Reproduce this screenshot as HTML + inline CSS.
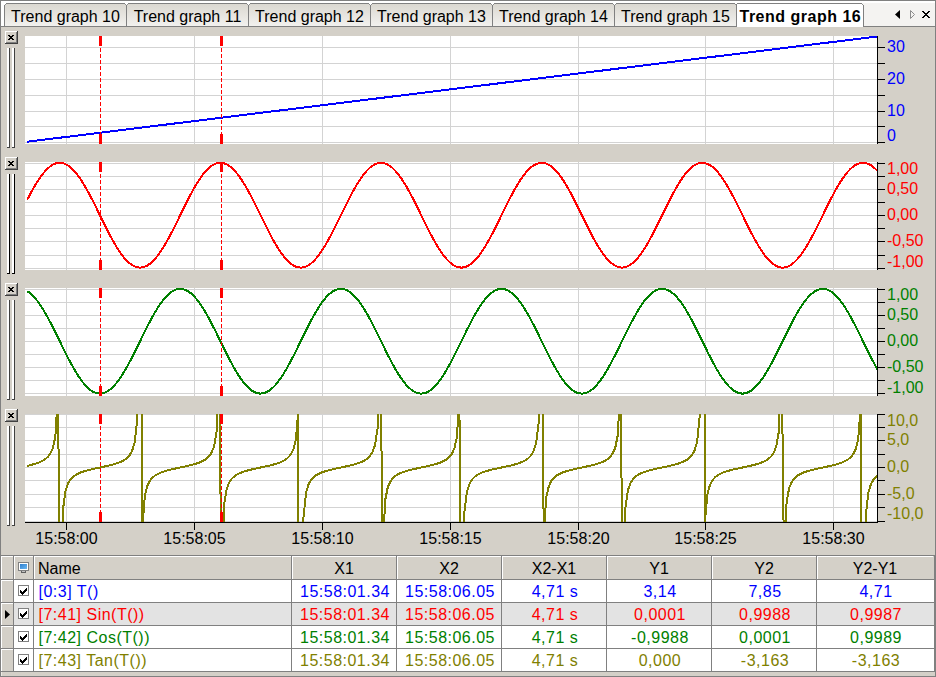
<!DOCTYPE html>
<html><head><meta charset="utf-8"><title>Trend graph</title>
<style>html,body{margin:0;padding:0;width:936px;height:677px;overflow:hidden;background:#d4d0c8;}
svg text{font-family:"Liberation Sans",sans-serif;}</style></head>
<body><svg width="936" height="677" viewBox="0 0 936 677" style="position:absolute;left:0;top:0;display:block" font-family="Liberation Sans, sans-serif"><rect x="0" y="0" width="936" height="677" fill="#d4d0c8"/>
<rect x="1" y="1" width="934" height="25" fill="#f4f3f1"/>
<rect x="1" y="1" width="3" height="25" fill="#ffffff"/>
<rect x="1" y="1" width="934" height="2" fill="#ffffff"/>
<rect x="0" y="0" width="936" height="1" fill="#808080"/>
<rect x="0" y="0" width="1" height="677" fill="#808080"/>
<rect x="935" y="0" width="1" height="677" fill="#808080"/>
<defs><linearGradient id="tg" x1="0" y1="0" x2="0" y2="1"><stop offset="0" stop-color="#dbd8d1"/><stop offset="1" stop-color="#f2f1ee"/></linearGradient></defs>
<rect x="5" y="4" width="121" height="22" fill="url(#tg)"/>
<rect x="4" y="4" width="1" height="22" fill="#808080"/>
<rect x="5" y="3" width="121" height="1" fill="#808080"/>
<text x="65.5" y="22" fill="#000" font-size="16" text-anchor="middle">Trend graph 10</text>
<rect x="127" y="4" width="121" height="22" fill="url(#tg)"/>
<rect x="126" y="4" width="1" height="22" fill="#808080"/>
<rect x="127" y="3" width="121" height="1" fill="#808080"/>
<text x="187.5" y="22" fill="#000" font-size="16" text-anchor="middle">Trend graph 11</text>
<rect x="249" y="4" width="121" height="22" fill="url(#tg)"/>
<rect x="248" y="4" width="1" height="22" fill="#808080"/>
<rect x="249" y="3" width="121" height="1" fill="#808080"/>
<text x="309.5" y="22" fill="#000" font-size="16" text-anchor="middle">Trend graph 12</text>
<rect x="371" y="4" width="121" height="22" fill="url(#tg)"/>
<rect x="370" y="4" width="1" height="22" fill="#808080"/>
<rect x="371" y="3" width="121" height="1" fill="#808080"/>
<text x="431.5" y="22" fill="#000" font-size="16" text-anchor="middle">Trend graph 13</text>
<rect x="493" y="4" width="121" height="22" fill="url(#tg)"/>
<rect x="492" y="4" width="1" height="22" fill="#808080"/>
<rect x="493" y="3" width="121" height="1" fill="#808080"/>
<text x="553.5" y="22" fill="#000" font-size="16" text-anchor="middle">Trend graph 14</text>
<rect x="615" y="4" width="121" height="22" fill="url(#tg)"/>
<rect x="614" y="4" width="1" height="22" fill="#808080"/>
<rect x="615" y="3" width="121" height="1" fill="#808080"/>
<text x="675.5" y="22" fill="#000" font-size="16" text-anchor="middle">Trend graph 15</text>
<rect x="736" y="4" width="1" height="22" fill="#808080"/>
<rect x="125" y="3" width="3" height="1" fill="#ffffff"/>
<rect x="126" y="4" width="1" height="1" fill="#ffffff"/>
<rect x="125" y="4" width="1" height="1" fill="#909090"/>
<rect x="127" y="4" width="1" height="1" fill="#909090"/>
<rect x="247" y="3" width="3" height="1" fill="#ffffff"/>
<rect x="248" y="4" width="1" height="1" fill="#ffffff"/>
<rect x="247" y="4" width="1" height="1" fill="#909090"/>
<rect x="249" y="4" width="1" height="1" fill="#909090"/>
<rect x="369" y="3" width="3" height="1" fill="#ffffff"/>
<rect x="370" y="4" width="1" height="1" fill="#ffffff"/>
<rect x="369" y="4" width="1" height="1" fill="#909090"/>
<rect x="371" y="4" width="1" height="1" fill="#909090"/>
<rect x="491" y="3" width="3" height="1" fill="#ffffff"/>
<rect x="492" y="4" width="1" height="1" fill="#ffffff"/>
<rect x="491" y="4" width="1" height="1" fill="#909090"/>
<rect x="493" y="4" width="1" height="1" fill="#909090"/>
<rect x="613" y="3" width="3" height="1" fill="#ffffff"/>
<rect x="614" y="4" width="1" height="1" fill="#ffffff"/>
<rect x="613" y="4" width="1" height="1" fill="#909090"/>
<rect x="615" y="4" width="1" height="1" fill="#909090"/>
<rect x="735" y="3" width="3" height="1" fill="#ffffff"/>
<rect x="736" y="4" width="1" height="1" fill="#ffffff"/>
<rect x="735" y="4" width="1" height="1" fill="#909090"/>
<rect x="737" y="4" width="1" height="1" fill="#909090"/>
<rect x="4" y="3" width="2" height="1" fill="#ffffff"/>
<rect x="4" y="4" width="1" height="1" fill="#ffffff"/>
<rect x="5" y="4" width="1" height="1" fill="#909090"/>
<rect x="1" y="26" width="735" height="1" fill="#808080"/>
<rect x="864" y="26" width="71" height="1" fill="#808080"/>
<rect x="737" y="4" width="126" height="23" fill="#ffffff"/>
<rect x="737" y="3" width="126" height="1" fill="#808080"/>
<rect x="736" y="4" width="1" height="23" fill="#808080"/>
<rect x="863" y="4" width="1" height="23" fill="#808080"/>
<text x="739.5" y="22" fill="#000" font-size="16" font-weight="bold" letter-spacing="0.5">Trend graph 16</text>
<rect x="862" y="3" width="2" height="1" fill="#f4f3f1"/>
<rect x="863" y="4" width="1" height="1" fill="#f4f3f1"/>
<rect x="862" y="4" width="1" height="1" fill="#909090"/>
<path d="M900 10 L900 19 L895 14.5 Z" fill="#000"/>
<path d="M910.5 10.5 L910.5 18.5 L914.5 14.5 Z" fill="none" stroke="#8c8c8c" stroke-width="1"/>
<rect x="922" y="11" width="2" height="1" fill="#000"/>
<rect x="928" y="11" width="2" height="1" fill="#000"/>
<rect x="923" y="12" width="2" height="1" fill="#000"/>
<rect x="927" y="12" width="2" height="1" fill="#000"/>
<rect x="924" y="13" width="4" height="1" fill="#000"/>
<rect x="925" y="14" width="2" height="1" fill="#000"/>
<rect x="924" y="15" width="4" height="1" fill="#000"/>
<rect x="923" y="16" width="2" height="1" fill="#000"/>
<rect x="927" y="16" width="2" height="1" fill="#000"/>
<rect x="922" y="17" width="2" height="1" fill="#000"/>
<rect x="928" y="17" width="2" height="1" fill="#000"/>
<rect x="5" y="31" width="13" height="13" fill="#404040"/>
<rect x="5" y="31" width="12" height="12" fill="#ffffff"/>
<rect x="6" y="32" width="11" height="11" fill="#808080"/>
<rect x="6" y="32" width="10" height="10" fill="#d4d0c8"/>
<rect x="8" y="35" width="2" height="1" fill="#000"/>
<rect x="12" y="35" width="2" height="1" fill="#000"/>
<rect x="9" y="36" width="4" height="1" fill="#000"/>
<rect x="10" y="37" width="2" height="1" fill="#000"/>
<rect x="9" y="38" width="4" height="1" fill="#000"/>
<rect x="8" y="39" width="2" height="1" fill="#000"/>
<rect x="12" y="39" width="2" height="1" fill="#000"/>
<rect x="7" y="48" width="3" height="100" fill="#404040"/>
<rect x="7" y="48" width="2" height="99" fill="#ffffff"/>
<rect x="12" y="48" width="3" height="100" fill="#404040"/>
<rect x="12" y="48" width="2" height="99" fill="#ffffff"/>
<rect x="25" y="36" width="852" height="108" fill="#ffffff"/>
<rect x="66" y="36" width="1" height="108" fill="#d3d3d3"/>
<rect x="194" y="36" width="1" height="108" fill="#d3d3d3"/>
<rect x="322" y="36" width="1" height="108" fill="#d3d3d3"/>
<rect x="450" y="36" width="1" height="108" fill="#d3d3d3"/>
<rect x="578" y="36" width="1" height="108" fill="#d3d3d3"/>
<rect x="705" y="36" width="1" height="108" fill="#d3d3d3"/>
<rect x="833" y="36" width="1" height="108" fill="#d3d3d3"/>
<rect x="25" y="47" width="852" height="1" fill="#d3d3d3"/>
<rect x="25" y="63" width="852" height="1" fill="#d3d3d3"/>
<rect x="25" y="79" width="852" height="1" fill="#d3d3d3"/>
<rect x="25" y="95" width="852" height="1" fill="#d3d3d3"/>
<rect x="25" y="111" width="852" height="1" fill="#d3d3d3"/>
<rect x="25" y="126" width="852" height="1" fill="#d3d3d3"/>
<rect x="25" y="142" width="852" height="1" fill="#d3d3d3"/>
<rect x="877" y="36" width="1" height="108" fill="#000"/>
<rect x="878" y="47" width="7" height="1" fill="#000"/>
<rect x="878" y="63" width="7" height="1" fill="#000"/>
<rect x="878" y="79" width="7" height="1" fill="#000"/>
<rect x="878" y="95" width="7" height="1" fill="#000"/>
<rect x="878" y="111" width="7" height="1" fill="#000"/>
<rect x="878" y="126" width="7" height="1" fill="#000"/>
<rect x="878" y="142" width="7" height="1" fill="#000"/>
<text x="887" y="52" fill="#0000ff" font-size="16">30</text>
<text x="887" y="84" fill="#0000ff" font-size="16">20</text>
<text x="887" y="116" fill="#0000ff" font-size="16">10</text>
<text x="887" y="141" fill="#0000ff" font-size="16">0</text>
<clipPath id="cp0"><rect x="25" y="36" width="852" height="108"/></clipPath>
<polyline clip-path="url(#cp0)" points="27.27,141.75 29.83,141.43 32.38,141.12 34.94,140.80 37.50,140.48 40.05,140.17 42.61,139.85 45.17,139.53 47.72,139.22 50.28,138.90 52.84,138.58 55.39,138.27 57.95,137.95 60.51,137.63 63.06,137.32 65.62,137.00 68.18,136.68 70.73,136.37 73.29,136.05 75.85,135.73 78.40,135.42 80.96,135.10 83.52,134.78 86.07,134.47 88.63,134.15 91.19,133.83 93.74,133.52 96.30,133.20 98.86,132.88 101.41,132.57 103.97,132.25 106.53,131.93 109.08,131.62 111.64,131.30 114.20,130.98 116.75,130.67 119.31,130.35 121.87,130.03 124.42,129.72 126.98,129.40 129.54,129.08 132.09,128.77 134.65,128.45 137.21,128.13 139.76,127.82 142.32,127.50 144.88,127.18 147.43,126.87 149.99,126.55 152.55,126.23 155.11,125.92 157.66,125.60 160.22,125.28 162.78,124.97 165.33,124.65 167.89,124.33 170.45,124.02 173.00,123.70 175.56,123.38 178.12,123.07 180.67,122.75 183.23,122.43 185.79,122.12 188.34,121.80 190.90,121.48 193.46,121.17 196.01,120.85 198.57,120.53 201.13,120.22 203.68,119.90 206.24,119.58 208.80,119.27 211.35,118.95 213.91,118.63 216.47,118.32 219.02,118.00 221.58,117.68 224.14,117.37 226.69,117.05 229.25,116.73 231.81,116.42 234.36,116.10 236.92,115.78 239.48,115.47 242.03,115.15 244.59,114.83 247.15,114.52 249.70,114.20 252.26,113.88 254.82,113.57 257.37,113.25 259.93,112.93 262.49,112.62 265.04,112.30 267.60,111.98 270.16,111.67 272.71,111.35 275.27,111.03 277.83,110.72 280.38,110.40 282.94,110.08 285.50,109.77 288.05,109.45 290.61,109.13 293.17,108.82 295.72,108.50 298.28,108.18 300.84,107.87 303.39,107.55 305.95,107.23 308.51,106.92 311.06,106.60 313.62,106.28 316.18,105.97 318.73,105.65 321.29,105.33 323.85,105.02 326.40,104.70 328.96,104.38 331.52,104.07 334.07,103.75 336.63,103.43 339.19,103.12 341.74,102.80 344.30,102.48 346.86,102.17 349.41,101.85 351.97,101.53 354.53,101.22 357.08,100.90 359.64,100.58 362.20,100.27 364.75,99.95 367.31,99.63 369.87,99.32 372.42,99.00 374.98,98.68 377.54,98.37 380.09,98.05 382.65,97.73 385.21,97.42 387.76,97.10 390.32,96.78 392.88,96.47 395.43,96.15 397.99,95.83 400.55,95.52 403.10,95.20 405.66,94.88 408.22,94.57 410.78,94.25 413.33,93.93 415.89,93.62 418.45,93.30 421.00,92.98 423.56,92.67 426.12,92.35 428.67,92.03 431.23,91.72 433.79,91.40 436.34,91.08 438.90,90.77 441.46,90.45 444.01,90.13 446.57,89.82 449.13,89.50 451.68,89.18 454.24,88.87 456.80,88.55 459.35,88.23 461.91,87.92 464.47,87.60 467.02,87.28 469.58,86.97 472.14,86.65 474.69,86.33 477.25,86.02 479.81,85.70 482.36,85.38 484.92,85.07 487.48,84.75 490.03,84.43 492.59,84.12 495.15,83.80 497.70,83.48 500.26,83.17 502.82,82.85 505.37,82.53 507.93,82.22 510.49,81.90 513.04,81.58 515.60,81.27 518.16,80.95 520.71,80.63 523.27,80.32 525.83,80.00 528.38,79.68 530.94,79.37 533.50,79.05 536.05,78.73 538.61,78.42 541.17,78.10 543.72,77.78 546.28,77.47 548.84,77.15 551.39,76.83 553.95,76.52 556.51,76.20 559.06,75.88 561.62,75.57 564.18,75.25 566.73,74.93 569.29,74.62 571.85,74.30 574.40,73.98 576.96,73.67 579.52,73.35 582.07,73.03 584.63,72.72 587.19,72.40 589.74,72.08 592.30,71.77 594.86,71.45 597.41,71.13 599.97,70.82 602.53,70.50 605.08,70.18 607.64,69.87 610.20,69.55 612.75,69.23 615.31,68.92 617.87,68.60 620.42,68.28 622.98,67.97 625.54,67.65 628.09,67.33 630.65,67.02 633.21,66.70 635.76,66.38 638.32,66.07 640.88,65.75 643.43,65.43 645.99,65.12 648.55,64.80 651.10,64.48 653.66,64.17 656.22,63.85 658.78,63.53 661.33,63.22 663.89,62.90 666.45,62.58 669.00,62.27 671.56,61.95 674.12,61.63 676.67,61.32 679.23,61.00 681.79,60.68 684.34,60.37 686.90,60.05 689.46,59.73 692.01,59.42 694.57,59.10 697.13,58.78 699.68,58.47 702.24,58.15 704.80,57.83 707.35,57.52 709.91,57.20 712.47,56.88 715.02,56.57 717.58,56.25 720.14,55.93 722.69,55.62 725.25,55.30 727.81,54.98 730.36,54.67 732.92,54.35 735.48,54.03 738.03,53.72 740.59,53.40 743.15,53.08 745.70,52.77 748.26,52.45 750.82,52.13 753.37,51.82 755.93,51.50 758.49,51.18 761.04,50.87 763.60,50.55 766.16,50.23 768.71,49.92 771.27,49.60 773.83,49.28 776.38,48.97 778.94,48.65 781.50,48.33 784.05,48.02 786.61,47.70 789.17,47.38 791.72,47.07 794.28,46.75 796.84,46.43 799.39,46.12 801.95,45.80 804.51,45.48 807.06,45.17 809.62,44.85 812.18,44.53 814.73,44.22 817.29,43.90 819.85,43.58 822.40,43.27 824.96,42.95 827.52,42.63 830.07,42.32 832.63,42.00 835.19,41.68 837.74,41.37 840.30,41.05 842.86,40.73 845.41,40.42 847.97,40.10 850.53,39.78 853.08,39.47 855.64,39.15 858.20,38.83 860.75,38.52 863.31,38.20 865.87,37.88 868.42,37.57 870.98,37.25 873.54,36.93 876.09,36.62 878.65,36.30" fill="none" stroke="#0000ff" stroke-width="2" stroke-linejoin="round" shape-rendering="crispEdges"/>
<line x1="100.5" y1="36" x2="100.5" y2="144" stroke="#ff0000" stroke-width="1" stroke-dasharray="4,2"/>
<rect x="99" y="36" width="3" height="10" fill="#ff0000"/>
<rect x="99" y="134" width="3" height="10" fill="#ff0000"/>
<line x1="221.5" y1="36" x2="221.5" y2="144" stroke="#ff0000" stroke-width="1" stroke-dasharray="4,2"/>
<rect x="220" y="36" width="3" height="10" fill="#ff0000"/>
<rect x="220" y="134" width="3" height="10" fill="#ff0000"/>
<rect x="5" y="157" width="13" height="13" fill="#404040"/>
<rect x="5" y="157" width="12" height="12" fill="#ffffff"/>
<rect x="6" y="158" width="11" height="11" fill="#808080"/>
<rect x="6" y="158" width="10" height="10" fill="#d4d0c8"/>
<rect x="8" y="161" width="2" height="1" fill="#000"/>
<rect x="12" y="161" width="2" height="1" fill="#000"/>
<rect x="9" y="162" width="4" height="1" fill="#000"/>
<rect x="10" y="163" width="2" height="1" fill="#000"/>
<rect x="9" y="164" width="4" height="1" fill="#000"/>
<rect x="8" y="165" width="2" height="1" fill="#000"/>
<rect x="12" y="165" width="2" height="1" fill="#000"/>
<rect x="7" y="174" width="3" height="100" fill="#000000"/>
<rect x="7" y="174" width="2" height="99" fill="#ffffff"/>
<rect x="12" y="174" width="3" height="100" fill="#000000"/>
<rect x="12" y="174" width="2" height="99" fill="#ffffff"/>
<rect x="25" y="162" width="852" height="108" fill="#ffffff"/>
<rect x="66" y="162" width="1" height="108" fill="#d3d3d3"/>
<rect x="194" y="162" width="1" height="108" fill="#d3d3d3"/>
<rect x="322" y="162" width="1" height="108" fill="#d3d3d3"/>
<rect x="450" y="162" width="1" height="108" fill="#d3d3d3"/>
<rect x="578" y="162" width="1" height="108" fill="#d3d3d3"/>
<rect x="705" y="162" width="1" height="108" fill="#d3d3d3"/>
<rect x="833" y="162" width="1" height="108" fill="#d3d3d3"/>
<rect x="25" y="163" width="852" height="1" fill="#d3d3d3"/>
<rect x="25" y="176" width="852" height="1" fill="#d3d3d3"/>
<rect x="25" y="189" width="852" height="1" fill="#d3d3d3"/>
<rect x="25" y="202" width="852" height="1" fill="#d3d3d3"/>
<rect x="25" y="215" width="852" height="1" fill="#d3d3d3"/>
<rect x="25" y="228" width="852" height="1" fill="#d3d3d3"/>
<rect x="25" y="241" width="852" height="1" fill="#d3d3d3"/>
<rect x="25" y="255" width="852" height="1" fill="#d3d3d3"/>
<rect x="25" y="268" width="852" height="1" fill="#d3d3d3"/>
<rect x="877" y="162" width="1" height="108" fill="#000"/>
<rect x="878" y="163" width="7" height="1" fill="#000"/>
<rect x="878" y="176" width="7" height="1" fill="#000"/>
<rect x="878" y="189" width="7" height="1" fill="#000"/>
<rect x="878" y="202" width="7" height="1" fill="#000"/>
<rect x="878" y="215" width="7" height="1" fill="#000"/>
<rect x="878" y="228" width="7" height="1" fill="#000"/>
<rect x="878" y="241" width="7" height="1" fill="#000"/>
<rect x="878" y="255" width="7" height="1" fill="#000"/>
<rect x="878" y="268" width="7" height="1" fill="#000"/>
<text x="887" y="174" fill="#ff0000" font-size="16">1,00</text>
<text x="887" y="194" fill="#ff0000" font-size="16">0,50</text>
<text x="887" y="220" fill="#ff0000" font-size="16">0,00</text>
<text x="887" y="246" fill="#ff0000" font-size="16">-0,50</text>
<text x="887" y="267" fill="#ff0000" font-size="16">-1,00</text>
<clipPath id="cp1"><rect x="25" y="162" width="852" height="108"/></clipPath>
<polyline clip-path="url(#cp1)" points="27.27,199.71 29.83,194.79 32.38,190.08 34.94,185.61 37.50,181.44 40.05,177.61 42.61,174.15 45.17,171.11 47.72,168.50 50.28,166.36 52.84,164.71 55.39,163.56 57.95,162.93 60.51,162.82 63.06,163.24 65.62,164.17 68.18,165.61 70.73,167.55 73.29,169.97 75.85,172.83 78.40,176.13 80.96,179.81 83.52,183.84 86.07,188.19 88.63,192.81 91.19,197.65 93.74,202.66 96.30,207.81 98.86,213.02 101.41,218.26 103.97,223.47 106.53,228.59 109.08,233.58 111.64,238.39 114.20,242.96 116.75,247.26 119.31,251.24 121.87,254.86 124.42,258.08 126.98,260.87 129.54,263.21 132.09,265.06 134.65,266.42 137.21,267.27 139.76,267.60 142.32,267.40 144.88,266.68 147.43,265.45 149.99,263.71 152.55,261.49 155.11,258.81 157.66,255.69 160.22,252.17 162.78,248.28 165.33,244.06 167.89,239.55 170.45,234.79 173.00,229.84 175.56,224.75 178.12,219.55 180.67,214.32 183.23,209.09 185.79,203.93 188.34,198.88 190.90,193.99 193.46,189.31 196.01,184.89 198.57,180.77 201.13,177.00 203.68,173.61 206.24,170.64 208.80,168.11 211.35,166.05 213.91,164.48 216.47,163.42 219.02,162.88 221.58,162.86 224.14,163.36 226.69,164.38 229.25,165.91 231.81,167.93 234.36,170.42 236.92,173.36 239.48,176.72 242.03,180.46 244.59,184.55 247.15,188.95 249.70,193.60 252.26,198.48 254.82,203.52 257.37,208.68 259.93,213.90 262.49,219.14 265.04,224.33 267.60,229.44 270.16,234.40 272.71,239.17 275.27,243.71 277.83,247.95 280.38,251.87 282.94,255.43 285.50,258.58 288.05,261.30 290.61,263.55 293.17,265.33 295.72,266.60 298.28,267.36 300.84,267.60 303.39,267.31 305.95,266.51 308.51,265.19 311.06,263.37 313.62,261.07 316.18,258.32 318.73,255.13 321.29,251.54 323.85,247.59 326.40,243.32 328.96,238.76 331.52,233.97 334.07,228.99 336.63,223.88 339.19,218.68 341.74,213.44 344.30,208.22 346.86,203.07 349.41,198.04 351.97,193.18 354.53,188.55 357.08,184.18 359.64,180.11 362.20,176.40 364.75,173.08 367.31,170.18 369.87,167.73 372.42,165.75 374.98,164.27 377.54,163.29 380.09,162.84 382.65,162.90 385.21,163.49 387.76,164.60 390.32,166.21 392.88,168.31 395.43,170.88 397.99,173.90 400.55,177.32 403.10,181.12 405.66,185.27 408.22,189.71 410.78,194.41 413.33,199.32 415.89,204.38 418.45,209.55 421.00,214.78 423.56,220.02 426.12,225.20 428.67,230.29 431.23,235.22 433.79,239.95 436.34,244.44 438.90,248.64 441.46,252.50 444.01,255.99 446.57,259.07 449.13,261.71 451.68,263.89 454.24,265.58 456.80,266.77 459.35,267.44 461.91,267.59 464.47,267.22 467.02,266.32 469.58,264.92 472.14,263.02 474.69,260.64 477.25,257.81 479.81,254.55 482.36,250.90 484.92,246.89 487.48,242.57 490.03,237.97 492.59,233.15 495.15,228.14 497.70,223.01 500.26,217.80 502.82,212.56 505.37,207.35 507.93,202.21 510.49,197.21 513.04,192.39 515.60,187.79 518.16,183.47 520.71,179.47 523.27,175.82 525.83,172.56 528.38,169.74 530.94,167.36 533.50,165.47 536.05,164.07 538.61,163.18 541.17,162.81 543.72,162.97 546.28,163.64 548.84,164.84 551.39,166.53 553.95,168.71 556.51,171.36 559.06,174.44 561.62,177.94 564.18,181.80 566.73,186.00 569.29,190.49 571.85,195.22 574.40,200.16 576.96,205.24 579.52,210.43 582.07,215.66 584.63,220.89 587.19,226.06 589.74,231.13 592.30,236.03 594.86,240.73 597.41,245.17 599.97,249.31 602.53,253.11 605.08,256.53 607.64,259.54 610.20,262.11 612.75,264.20 615.31,265.81 617.87,266.91 620.42,267.50 622.98,267.56 625.54,267.10 628.09,266.12 630.65,264.63 633.21,262.65 635.76,260.20 638.32,257.29 640.88,253.96 643.43,250.25 645.99,246.19 648.55,241.81 651.10,237.17 653.66,232.32 656.22,227.29 658.78,222.14 661.33,216.92 663.89,211.68 666.45,206.48 669.00,201.36 671.56,196.39 674.12,191.60 676.67,187.04 679.23,182.77 681.79,178.83 684.34,175.24 686.90,172.06 689.46,169.30 692.01,167.01 694.57,165.20 697.13,163.88 699.68,163.08 702.24,162.80 704.80,163.04 707.35,163.81 709.91,165.09 712.47,166.86 715.02,169.13 717.58,171.85 720.14,175.00 722.69,178.56 725.25,182.48 727.81,186.73 730.36,191.27 732.92,196.04 735.48,201.00 738.03,206.11 740.59,211.31 743.15,216.54 745.70,221.77 748.26,226.92 750.82,231.96 753.37,236.84 755.93,241.49 758.49,245.89 761.04,249.97 763.60,253.71 766.16,257.07 768.71,260.01 771.27,262.49 773.83,264.51 776.38,266.03 778.94,267.05 781.50,267.55 784.05,267.52 786.61,266.97 789.17,265.91 791.72,264.34 794.28,262.27 796.84,259.74 799.39,256.76 801.95,253.37 804.51,249.59 807.06,245.47 809.62,241.05 812.18,236.37 814.73,231.48 817.29,226.43 819.85,221.26 822.40,216.03 824.96,210.80 827.52,205.61 830.07,200.51 832.63,195.57 835.19,190.81 837.74,186.31 840.30,182.09 842.86,178.20 845.41,174.68 847.97,171.56 850.53,168.89 853.08,166.67 855.64,164.94 858.20,163.71 860.75,163.00 863.31,162.80 865.87,163.14 868.42,163.99 870.98,165.35 873.54,167.21 876.09,169.55 878.65,172.35" fill="none" stroke="#ff0000" stroke-width="2" stroke-linejoin="round" shape-rendering="crispEdges"/>
<line x1="100.5" y1="162" x2="100.5" y2="270" stroke="#ff0000" stroke-width="1" stroke-dasharray="4,2"/>
<rect x="99" y="162" width="3" height="10" fill="#ff0000"/>
<rect x="99" y="260" width="3" height="10" fill="#ff0000"/>
<line x1="221.5" y1="162" x2="221.5" y2="270" stroke="#ff0000" stroke-width="1" stroke-dasharray="4,2"/>
<rect x="220" y="162" width="3" height="10" fill="#ff0000"/>
<rect x="220" y="260" width="3" height="10" fill="#ff0000"/>
<rect x="5" y="283" width="13" height="13" fill="#404040"/>
<rect x="5" y="283" width="12" height="12" fill="#ffffff"/>
<rect x="6" y="284" width="11" height="11" fill="#808080"/>
<rect x="6" y="284" width="10" height="10" fill="#d4d0c8"/>
<rect x="8" y="287" width="2" height="1" fill="#000"/>
<rect x="12" y="287" width="2" height="1" fill="#000"/>
<rect x="9" y="288" width="4" height="1" fill="#000"/>
<rect x="10" y="289" width="2" height="1" fill="#000"/>
<rect x="9" y="290" width="4" height="1" fill="#000"/>
<rect x="8" y="291" width="2" height="1" fill="#000"/>
<rect x="12" y="291" width="2" height="1" fill="#000"/>
<rect x="7" y="300" width="3" height="100" fill="#404040"/>
<rect x="7" y="300" width="2" height="99" fill="#ffffff"/>
<rect x="12" y="300" width="3" height="100" fill="#404040"/>
<rect x="12" y="300" width="2" height="99" fill="#ffffff"/>
<rect x="25" y="288" width="852" height="108" fill="#ffffff"/>
<rect x="66" y="288" width="1" height="108" fill="#d3d3d3"/>
<rect x="194" y="288" width="1" height="108" fill="#d3d3d3"/>
<rect x="322" y="288" width="1" height="108" fill="#d3d3d3"/>
<rect x="450" y="288" width="1" height="108" fill="#d3d3d3"/>
<rect x="578" y="288" width="1" height="108" fill="#d3d3d3"/>
<rect x="705" y="288" width="1" height="108" fill="#d3d3d3"/>
<rect x="833" y="288" width="1" height="108" fill="#d3d3d3"/>
<rect x="25" y="289" width="852" height="1" fill="#d3d3d3"/>
<rect x="25" y="302" width="852" height="1" fill="#d3d3d3"/>
<rect x="25" y="315" width="852" height="1" fill="#d3d3d3"/>
<rect x="25" y="328" width="852" height="1" fill="#d3d3d3"/>
<rect x="25" y="341" width="852" height="1" fill="#d3d3d3"/>
<rect x="25" y="354" width="852" height="1" fill="#d3d3d3"/>
<rect x="25" y="367" width="852" height="1" fill="#d3d3d3"/>
<rect x="25" y="380" width="852" height="1" fill="#d3d3d3"/>
<rect x="25" y="393" width="852" height="1" fill="#d3d3d3"/>
<rect x="877" y="288" width="1" height="108" fill="#000"/>
<rect x="878" y="289" width="7" height="1" fill="#000"/>
<rect x="878" y="302" width="7" height="1" fill="#000"/>
<rect x="878" y="315" width="7" height="1" fill="#000"/>
<rect x="878" y="328" width="7" height="1" fill="#000"/>
<rect x="878" y="341" width="7" height="1" fill="#000"/>
<rect x="878" y="354" width="7" height="1" fill="#000"/>
<rect x="878" y="367" width="7" height="1" fill="#000"/>
<rect x="878" y="380" width="7" height="1" fill="#000"/>
<rect x="878" y="393" width="7" height="1" fill="#000"/>
<text x="887" y="300" fill="#008000" font-size="16">1,00</text>
<text x="887" y="320" fill="#008000" font-size="16">0,50</text>
<text x="887" y="346" fill="#008000" font-size="16">0,00</text>
<text x="887" y="372" fill="#008000" font-size="16">-0,50</text>
<text x="887" y="393" fill="#008000" font-size="16">-1,00</text>
<clipPath id="cp2"><rect x="25" y="288" width="852" height="108"/></clipPath>
<polyline clip-path="url(#cp2)" points="27.27,291.14 29.83,292.94 32.38,295.21 34.94,297.95 37.50,301.12 40.05,304.69 42.61,308.63 45.17,312.89 47.72,317.43 50.28,322.21 52.84,327.18 55.39,332.29 57.95,337.49 60.51,342.73 63.06,347.95 65.62,353.11 68.18,358.14 70.73,363.01 73.29,367.65 75.85,372.04 78.40,376.11 80.96,379.84 83.52,383.18 86.07,386.10 88.63,388.57 91.19,390.57 93.74,392.08 96.30,393.08 98.86,393.55 101.41,393.51 103.97,392.94 106.53,391.86 109.08,390.27 111.64,388.19 114.20,385.64 116.75,382.65 119.31,379.24 121.87,375.45 124.42,371.32 126.98,366.89 129.54,362.20 132.09,357.30 134.65,352.25 137.21,347.08 139.76,341.85 142.32,336.62 144.88,331.43 147.43,326.34 149.99,321.39 152.55,316.65 155.11,312.15 157.66,307.94 160.22,304.07 162.78,300.56 165.33,297.46 167.89,294.80 170.45,292.60 173.00,290.89 175.56,289.68 178.12,288.98 180.67,288.81 183.23,289.16 185.79,290.03 188.34,291.41 190.90,293.29 193.46,295.64 196.01,298.46 198.57,301.70 201.13,305.33 203.68,309.32 206.24,313.63 208.80,318.22 211.35,323.04 213.91,328.03 216.47,333.16 219.02,338.37 221.58,343.61 224.14,348.82 226.69,353.96 229.25,358.97 231.81,363.80 234.36,368.41 236.92,372.75 239.48,376.76 242.03,380.43 244.59,383.70 247.15,386.55 249.70,388.94 252.26,390.86 254.82,392.28 257.37,393.19 259.93,393.58 262.49,393.45 265.04,392.80 267.60,391.63 270.16,389.95 272.71,387.79 275.27,385.17 277.83,382.10 280.38,378.63 282.94,374.78 285.50,370.60 288.05,366.12 290.61,361.39 293.17,356.46 295.72,351.38 298.28,346.20 300.84,340.97 303.39,335.74 305.95,330.56 308.51,325.49 311.06,320.58 313.62,315.87 316.18,311.42 318.73,307.27 321.29,303.45 323.85,300.01 326.40,296.98 328.96,294.40 331.52,292.28 334.07,290.65 336.63,289.52 339.19,288.92 341.74,288.83 344.30,289.27 346.86,290.22 349.41,291.69 351.97,293.65 354.53,296.09 357.08,298.97 359.64,302.28 362.20,305.98 364.75,310.03 367.31,314.39 369.87,319.02 372.42,323.87 374.98,328.89 377.54,334.03 380.09,339.25 382.65,344.49 385.21,349.69 387.76,354.81 390.32,359.80 392.88,364.60 395.43,369.16 397.99,373.44 400.55,377.41 403.10,381.01 405.66,384.21 408.22,386.98 410.78,389.30 413.33,391.13 415.89,392.47 418.45,393.29 421.00,393.60 423.56,393.38 426.12,392.64 428.67,391.38 431.23,389.62 433.79,387.38 436.34,384.68 438.90,381.55 441.46,378.01 444.01,374.10 446.57,369.86 449.13,365.34 451.68,360.58 454.24,355.62 456.80,350.52 459.35,345.32 461.91,340.09 464.47,334.86 467.02,329.70 469.58,324.66 472.14,319.77 474.69,315.11 477.25,310.70 479.81,306.60 482.36,302.84 484.92,299.47 487.48,296.52 490.03,294.01 492.59,291.97 495.15,290.42 497.70,289.38 500.26,288.86 502.82,288.87 505.37,289.39 507.93,290.43 510.49,291.98 513.04,294.03 515.60,296.54 518.16,299.50 520.71,302.88 523.27,306.63 525.83,310.74 528.38,315.15 530.94,319.82 533.50,324.70 536.05,329.75 538.61,334.91 541.17,340.13 543.72,345.37 546.28,350.56 548.84,355.66 551.39,360.62 553.95,365.38 556.51,369.90 559.06,374.13 561.62,378.04 564.18,381.57 566.73,384.71 569.29,387.41 571.85,389.64 574.40,391.39 576.96,392.65 579.52,393.38 582.07,393.60 584.63,393.29 587.19,392.46 589.74,391.12 592.30,389.28 594.86,386.96 597.41,384.18 599.97,380.98 602.53,377.37 605.08,373.41 607.64,369.12 610.20,364.55 612.75,359.75 615.31,354.77 617.87,349.65 620.42,344.44 622.98,339.21 625.54,333.99 628.09,328.84 630.65,323.82 633.21,318.97 635.76,314.35 638.32,309.99 640.88,305.94 643.43,302.25 645.99,298.94 648.55,296.06 651.10,293.63 653.66,291.67 656.22,290.21 658.78,289.26 661.33,288.83 663.89,288.92 666.45,289.53 669.00,290.66 671.56,292.29 674.12,294.42 676.67,297.01 679.23,300.04 681.79,303.48 684.34,307.30 686.90,311.46 689.46,315.92 692.01,320.62 694.57,325.54 697.13,330.61 699.68,335.78 702.24,341.01 704.80,346.25 707.35,351.43 709.91,356.51 712.47,361.43 715.02,366.16 717.58,370.63 720.14,374.82 722.69,378.66 725.25,382.13 727.81,385.19 730.36,387.81 732.92,389.97 735.48,391.64 738.03,392.81 740.59,393.46 743.15,393.58 745.70,393.19 748.26,392.27 750.82,390.85 753.37,388.92 755.93,386.53 758.49,383.67 761.04,380.40 763.60,376.73 766.16,372.71 768.71,368.37 771.27,363.76 773.83,358.93 776.38,353.92 778.94,348.78 781.50,343.56 784.05,338.33 786.61,333.12 789.17,327.99 791.72,322.99 794.28,318.18 796.84,313.59 799.39,309.29 801.95,305.30 804.51,301.66 807.06,298.43 809.62,295.62 812.18,293.27 814.73,291.39 817.29,290.02 819.85,289.15 822.40,288.81 824.96,288.99 827.52,289.69 830.07,290.90 832.63,292.62 835.19,294.82 837.74,297.49 840.30,300.59 842.86,304.10 845.41,307.98 847.97,312.19 850.53,316.69 853.08,321.44 855.64,326.38 858.20,331.47 860.75,336.66 863.31,341.90 865.87,347.12 868.42,352.29 870.98,357.35 873.54,362.24 876.09,366.93 878.65,371.36" fill="none" stroke="#008000" stroke-width="2" stroke-linejoin="round" shape-rendering="crispEdges"/>
<line x1="100.5" y1="288" x2="100.5" y2="396" stroke="#ff0000" stroke-width="1" stroke-dasharray="4,2"/>
<rect x="99" y="288" width="3" height="10" fill="#ff0000"/>
<rect x="99" y="386" width="3" height="10" fill="#ff0000"/>
<line x1="221.5" y1="288" x2="221.5" y2="396" stroke="#ff0000" stroke-width="1" stroke-dasharray="4,2"/>
<rect x="220" y="288" width="3" height="10" fill="#ff0000"/>
<rect x="220" y="386" width="3" height="10" fill="#ff0000"/>
<rect x="5" y="409" width="13" height="13" fill="#404040"/>
<rect x="5" y="409" width="12" height="12" fill="#ffffff"/>
<rect x="6" y="410" width="11" height="11" fill="#808080"/>
<rect x="6" y="410" width="10" height="10" fill="#d4d0c8"/>
<rect x="8" y="413" width="2" height="1" fill="#000"/>
<rect x="12" y="413" width="2" height="1" fill="#000"/>
<rect x="9" y="414" width="4" height="1" fill="#000"/>
<rect x="10" y="415" width="2" height="1" fill="#000"/>
<rect x="9" y="416" width="4" height="1" fill="#000"/>
<rect x="8" y="417" width="2" height="1" fill="#000"/>
<rect x="12" y="417" width="2" height="1" fill="#000"/>
<rect x="7" y="426" width="3" height="100" fill="#404040"/>
<rect x="7" y="426" width="2" height="99" fill="#ffffff"/>
<rect x="12" y="426" width="3" height="100" fill="#404040"/>
<rect x="12" y="426" width="2" height="99" fill="#ffffff"/>
<rect x="25" y="414" width="852" height="108" fill="#ffffff"/>
<rect x="66" y="414" width="1" height="108" fill="#d3d3d3"/>
<rect x="194" y="414" width="1" height="108" fill="#d3d3d3"/>
<rect x="322" y="414" width="1" height="108" fill="#d3d3d3"/>
<rect x="450" y="414" width="1" height="108" fill="#d3d3d3"/>
<rect x="578" y="414" width="1" height="108" fill="#d3d3d3"/>
<rect x="705" y="414" width="1" height="108" fill="#d3d3d3"/>
<rect x="833" y="414" width="1" height="108" fill="#d3d3d3"/>
<rect x="25" y="414" width="852" height="1" fill="#d3d3d3"/>
<rect x="25" y="427" width="852" height="1" fill="#d3d3d3"/>
<rect x="25" y="440" width="852" height="1" fill="#d3d3d3"/>
<rect x="25" y="454" width="852" height="1" fill="#d3d3d3"/>
<rect x="25" y="467" width="852" height="1" fill="#d3d3d3"/>
<rect x="25" y="480" width="852" height="1" fill="#d3d3d3"/>
<rect x="25" y="494" width="852" height="1" fill="#d3d3d3"/>
<rect x="25" y="507" width="852" height="1" fill="#d3d3d3"/>
<rect x="25" y="521" width="852" height="1" fill="#d3d3d3"/>
<rect x="877" y="414" width="1" height="109" fill="#000"/>
<rect x="878" y="414" width="7" height="1" fill="#000"/>
<rect x="878" y="427" width="7" height="1" fill="#000"/>
<rect x="878" y="440" width="7" height="1" fill="#000"/>
<rect x="878" y="454" width="7" height="1" fill="#000"/>
<rect x="878" y="467" width="7" height="1" fill="#000"/>
<rect x="878" y="480" width="7" height="1" fill="#000"/>
<rect x="878" y="494" width="7" height="1" fill="#000"/>
<rect x="878" y="507" width="7" height="1" fill="#000"/>
<rect x="878" y="521" width="7" height="1" fill="#000"/>
<text x="887" y="426" fill="#808000" font-size="16">10,0</text>
<text x="887" y="445" fill="#808000" font-size="16">5,0</text>
<text x="887" y="472" fill="#808000" font-size="16">0,0</text>
<text x="887" y="499" fill="#808000" font-size="16">-5,0</text>
<text x="887" y="519" fill="#808000" font-size="16">-10,0</text>
<clipPath id="cp3"><rect x="25" y="414" width="852" height="108"/></clipPath>
<polyline clip-path="url(#cp3)" points="27.27,465.85 29.83,465.24 32.38,464.58 34.94,463.84 37.50,462.99 40.05,461.99 42.61,460.76 45.17,459.17 47.72,456.99 50.28,453.74 52.84,448.23 55.39,436.48 57.95,392.06 60.51,650.64 63.06,508.68 65.62,490.43 68.18,483.16 70.73,479.19 73.29,476.65 75.85,474.85 78.40,473.49 80.96,472.40 83.52,471.50 86.07,470.72 88.63,470.03 91.19,469.40 93.74,468.82 96.30,468.26 98.86,467.72 101.41,467.19 103.97,466.65 106.53,466.09 109.08,465.50 111.64,464.86 114.20,464.16 116.75,463.36 119.31,462.43 121.87,461.31 124.42,459.88 126.98,457.99 129.54,455.27 132.09,450.93 134.65,442.69 137.21,420.10 139.76,35.69 142.32,528.41 144.88,495.68 147.43,485.59 149.99,480.60 152.55,477.59 155.11,475.53 157.66,474.01 160.22,472.83 162.78,471.85 165.33,471.03 167.89,470.31 170.45,469.66 173.00,469.06 175.56,468.49 178.12,467.95 180.67,467.41 183.23,466.87 185.79,466.32 188.34,465.75 190.90,465.13 193.46,464.46 196.01,463.71 198.57,462.84 201.13,461.80 203.68,460.52 206.24,458.85 208.80,456.54 211.35,453.02 213.91,446.89 216.47,433.03 219.02,368.49 221.58,583.68 224.14,503.88 226.69,488.81 229.25,482.34 231.81,478.69 234.36,476.30 236.92,474.60 239.48,473.29 242.03,472.24 244.59,471.36 247.15,470.60 249.70,469.92 252.26,469.30 254.82,468.72 257.37,468.17 259.93,467.63 262.49,467.10 265.04,466.55 267.60,465.99 270.16,465.39 272.71,464.75 275.27,464.03 277.83,463.22 280.38,462.26 282.94,461.09 285.50,459.61 288.05,457.60 290.61,454.69 293.17,449.93 295.72,440.49 298.28,411.69 300.84,1676.34 303.39,518.55 305.95,493.31 308.51,484.53 311.06,480.00 313.62,477.19 316.18,475.25 318.73,473.79 321.29,472.65 323.85,471.71 326.40,470.90 328.96,470.19 331.52,469.55 334.07,468.96 336.63,468.40 339.19,467.86 341.74,467.32 344.30,466.78 346.86,466.23 349.41,465.65 351.97,465.02 354.53,464.34 357.08,463.57 359.64,462.68 362.20,461.61 364.75,460.27 367.31,458.52 369.87,456.05 372.42,452.24 374.98,445.37 377.54,428.74 380.09,323.62 382.65,552.53 385.21,500.06 387.76,487.38 390.32,481.59 392.88,478.22 395.43,475.98 397.99,474.35 400.55,473.10 403.10,472.08 405.66,471.22 408.22,470.48 410.78,469.81 413.33,469.20 415.89,468.63 418.45,468.08 421.00,467.54 423.56,467.01 426.12,466.46 428.67,465.89 431.23,465.29 433.79,464.63 436.34,463.90 438.90,463.07 441.46,462.08 444.01,460.87 446.57,459.31 449.13,457.19 451.68,454.06 454.24,448.81 456.80,437.89 459.35,399.71 461.91,719.34 464.47,511.41 467.02,491.29 469.58,483.58 472.14,479.44 474.69,476.82 477.25,474.97 479.81,473.58 482.36,472.48 484.92,471.56 487.48,470.78 490.03,470.08 492.59,469.45 495.15,468.86 497.70,468.31 500.26,467.77 502.82,467.23 505.37,466.69 507.93,466.13 510.49,465.54 513.04,464.91 515.60,464.22 518.16,463.43 520.71,462.51 523.27,461.40 525.83,460.01 528.38,458.16 530.94,455.53 533.50,451.37 536.05,443.61 538.61,423.26 541.17,204.67 543.72,534.53 546.28,496.96 548.84,486.13 551.39,480.91 553.95,477.79 556.51,475.67 559.06,474.12 561.62,472.91 564.18,471.93 566.73,471.09 569.29,470.36 571.85,469.71 574.40,469.10 576.96,468.54 579.52,467.99 582.07,467.45 584.63,466.92 587.19,466.37 589.74,465.79 592.30,465.18 594.86,464.52 597.41,463.77 599.97,462.91 602.53,461.89 605.08,460.63 607.64,459.00 610.20,456.75 612.75,453.37 615.31,447.55 617.87,434.75 620.42,381.24 622.98,608.02 625.54,506.01 628.09,489.55 630.65,482.72 633.21,478.92 635.76,476.46 638.32,474.71 640.88,473.38 643.43,472.31 645.99,471.42 648.55,470.65 651.10,469.97 653.66,469.35 656.22,468.77 658.78,468.21 661.33,467.68 663.89,467.14 666.45,466.60 669.00,466.04 671.56,465.44 674.12,464.80 676.67,464.09 679.23,463.29 681.79,462.34 684.34,461.19 686.90,459.74 689.46,457.79 692.01,454.97 694.57,450.42 697.13,441.58 699.68,416.01 702.24,-1044.84 704.80,522.79 707.35,494.38 709.91,485.01 712.47,480.28 715.02,477.38 717.58,475.38 720.14,473.90 722.69,472.73 725.25,471.78 727.81,470.96 730.36,470.25 732.92,469.60 735.48,469.01 738.03,468.44 740.59,467.90 743.15,467.36 745.70,466.82 748.26,466.27 750.82,465.69 753.37,465.07 755.93,464.40 758.49,463.63 761.04,462.75 763.60,461.70 766.16,460.39 768.71,458.68 771.27,456.29 773.83,452.62 776.38,446.11 778.94,430.90 781.50,349.03 784.05,564.91 786.61,501.77 789.17,488.03 791.72,481.94 794.28,478.44 796.84,476.13 799.39,474.47 801.95,473.19 804.51,472.15 807.06,471.29 809.62,470.53 812.18,469.86 814.73,469.25 817.29,468.67 819.85,468.12 822.40,467.59 824.96,467.05 827.52,466.50 830.07,465.94 832.63,465.34 835.19,464.69 837.74,463.96 840.30,463.14 842.86,462.16 845.41,460.97 847.97,459.45 850.53,457.39 853.08,454.36 855.64,449.36 858.20,439.18 860.75,405.96 863.31,870.42 865.87,514.53 868.42,492.20 870.98,484.02 873.54,479.70 876.09,476.99 878.65,475.10" fill="none" stroke="#808000" stroke-width="2" stroke-linejoin="round" shape-rendering="crispEdges"/>
<line x1="100.5" y1="414" x2="100.5" y2="522" stroke="#ff0000" stroke-width="1" stroke-dasharray="4,2"/>
<rect x="99" y="414" width="3" height="10" fill="#ff0000"/>
<rect x="99" y="512" width="3" height="10" fill="#ff0000"/>
<line x1="221.5" y1="414" x2="221.5" y2="522" stroke="#ff0000" stroke-width="1" stroke-dasharray="4,2"/>
<rect x="220" y="414" width="3" height="10" fill="#ff0000"/>
<rect x="220" y="512" width="3" height="10" fill="#ff0000"/>
<rect x="25" y="522" width="853" height="1" fill="#000"/>
<rect x="66" y="523" width="1" height="7" fill="#000"/>
<text x="66.5" y="544" fill="#000" font-size="16" text-anchor="middle">15:58:00</text>
<rect x="194" y="523" width="1" height="7" fill="#000"/>
<text x="194.5" y="544" fill="#000" font-size="16" text-anchor="middle">15:58:05</text>
<rect x="322" y="523" width="1" height="7" fill="#000"/>
<text x="322.5" y="544" fill="#000" font-size="16" text-anchor="middle">15:58:10</text>
<rect x="450" y="523" width="1" height="7" fill="#000"/>
<text x="450.5" y="544" fill="#000" font-size="16" text-anchor="middle">15:58:15</text>
<rect x="578" y="523" width="1" height="7" fill="#000"/>
<text x="578.5" y="544" fill="#000" font-size="16" text-anchor="middle">15:58:20</text>
<rect x="705" y="523" width="1" height="7" fill="#000"/>
<text x="705.5" y="544" fill="#000" font-size="16" text-anchor="middle">15:58:25</text>
<rect x="833" y="523" width="1" height="7" fill="#000"/>
<text x="833.5" y="544" fill="#000" font-size="16" text-anchor="middle">15:58:30</text>
<rect x="1" y="555" width="934" height="1" fill="#808080"/>
<rect x="1" y="556" width="933" height="23" fill="#d4d0c8"/>
<rect x="1" y="556" width="12" height="1" fill="#ffffff"/>
<rect x="1" y="556" width="1" height="23" fill="#ffffff"/>
<rect x="14" y="556" width="19" height="1" fill="#ffffff"/>
<rect x="14" y="556" width="1" height="23" fill="#ffffff"/>
<rect x="34" y="556" width="257" height="1" fill="#ffffff"/>
<rect x="34" y="556" width="1" height="23" fill="#ffffff"/>
<rect x="292" y="556" width="104" height="1" fill="#ffffff"/>
<rect x="292" y="556" width="1" height="23" fill="#ffffff"/>
<rect x="397" y="556" width="104" height="1" fill="#ffffff"/>
<rect x="397" y="556" width="1" height="23" fill="#ffffff"/>
<rect x="502" y="556" width="104" height="1" fill="#ffffff"/>
<rect x="502" y="556" width="1" height="23" fill="#ffffff"/>
<rect x="607" y="556" width="104" height="1" fill="#ffffff"/>
<rect x="607" y="556" width="1" height="23" fill="#ffffff"/>
<rect x="712" y="556" width="104" height="1" fill="#ffffff"/>
<rect x="712" y="556" width="1" height="23" fill="#ffffff"/>
<rect x="817" y="556" width="116" height="1" fill="#ffffff"/>
<rect x="817" y="556" width="1" height="23" fill="#ffffff"/>
<rect x="1" y="580" width="13" height="22" fill="#d4d0c8"/>
<rect x="1" y="580" width="12" height="1" fill="#ffffff"/>
<rect x="1" y="580" width="1" height="22" fill="#ffffff"/>
<rect x="14" y="580" width="920" height="22" fill="#ffffff"/>
<rect x="1" y="603" width="13" height="22" fill="#d4d0c8"/>
<rect x="1" y="603" width="12" height="1" fill="#ffffff"/>
<rect x="1" y="603" width="1" height="22" fill="#ffffff"/>
<rect x="14" y="603" width="920" height="22" fill="#e3e3e3"/>
<rect x="1" y="626" width="13" height="22" fill="#d4d0c8"/>
<rect x="1" y="626" width="12" height="1" fill="#ffffff"/>
<rect x="1" y="626" width="1" height="22" fill="#ffffff"/>
<rect x="14" y="626" width="920" height="22" fill="#ffffff"/>
<rect x="1" y="649" width="13" height="22" fill="#d4d0c8"/>
<rect x="1" y="649" width="12" height="1" fill="#ffffff"/>
<rect x="1" y="649" width="1" height="22" fill="#ffffff"/>
<rect x="14" y="649" width="920" height="22" fill="#ffffff"/>
<rect x="13" y="556" width="1" height="115" fill="#808080"/>
<rect x="33" y="556" width="1" height="115" fill="#808080"/>
<rect x="291" y="556" width="1" height="115" fill="#808080"/>
<rect x="396" y="556" width="1" height="115" fill="#808080"/>
<rect x="501" y="556" width="1" height="115" fill="#808080"/>
<rect x="606" y="556" width="1" height="115" fill="#808080"/>
<rect x="711" y="556" width="1" height="115" fill="#808080"/>
<rect x="816" y="556" width="1" height="115" fill="#808080"/>
<rect x="934" y="555" width="1" height="117" fill="#808080"/>
<rect x="1" y="579" width="933" height="1" fill="#808080"/>
<rect x="1" y="602" width="933" height="1" fill="#808080"/>
<rect x="1" y="625" width="933" height="1" fill="#808080"/>
<rect x="1" y="648" width="933" height="1" fill="#808080"/>
<rect x="1" y="671" width="933" height="1" fill="#808080"/>
<rect x="1" y="672" width="1" height="4" fill="#eceae4"/>
<rect x="1" y="676" width="934" height="1" fill="#808080"/>
<rect x="18" y="562" width="11" height="9" fill="#808080"/>
<rect x="19" y="563" width="9" height="7" fill="#ffffff"/>
<defs><linearGradient id="mg" x1="0" y1="0" x2="1" y2="1"><stop offset="0" stop-color="#2f7fd0"/><stop offset="1" stop-color="#6cb8f0"/></linearGradient></defs>
<rect x="20" y="564" width="7" height="5" fill="url(#mg)"/>
<rect x="21" y="571" width="5" height="2" fill="#606060"/>
<rect x="22" y="571" width="3" height="1" fill="#c0c0c0"/>
<text x="38" y="574" fill="#000" font-size="16">Name</text>
<text x="344.0" y="574" fill="#000" font-size="16" text-anchor="middle">X1</text>
<text x="449.0" y="574" fill="#000" font-size="16" text-anchor="middle">X2</text>
<text x="554.0" y="574" fill="#000" font-size="16" text-anchor="middle">X2-X1</text>
<text x="659.0" y="574" fill="#000" font-size="16" text-anchor="middle">Y1</text>
<text x="764.0" y="574" fill="#000" font-size="16" text-anchor="middle">Y2</text>
<text x="875.0" y="574" fill="#000" font-size="16" text-anchor="middle">Y2-Y1</text>
<rect x="18" y="585" width="11" height="11" fill="#808080"/>
<rect x="19" y="586" width="9" height="9" fill="#ffffff"/>
<rect x="26" y="588" width="1" height="1" fill="#000"/>
<rect x="25" y="589" width="2" height="1" fill="#000"/>
<rect x="20" y="590" width="1" height="1" fill="#000"/>
<rect x="24" y="590" width="3" height="1" fill="#000"/>
<rect x="20" y="591" width="2" height="1" fill="#000"/>
<rect x="23" y="591" width="3" height="1" fill="#000"/>
<rect x="20" y="592" width="5" height="1" fill="#000"/>
<rect x="21" y="593" width="3" height="1" fill="#000"/>
<rect x="22" y="594" width="1" height="1" fill="#000"/>
<text x="38.5" y="597" fill="#0000ff" font-size="16" letter-spacing="0.5">[0:3] T()</text>
<text x="345.0" y="597" fill="#0000ff" font-size="16" text-anchor="middle" letter-spacing="0.5">15:58:01.34</text>
<text x="450.0" y="597" fill="#0000ff" font-size="16" text-anchor="middle" letter-spacing="0.5">15:58:06.05</text>
<text x="555.0" y="597" fill="#0000ff" font-size="16" text-anchor="middle" letter-spacing="0.5">4,71 s</text>
<text x="660.0" y="597" fill="#0000ff" font-size="16" text-anchor="middle" letter-spacing="0.5">3,14</text>
<text x="765.0" y="597" fill="#0000ff" font-size="16" text-anchor="middle" letter-spacing="0.5">7,85</text>
<text x="876.0" y="597" fill="#0000ff" font-size="16" text-anchor="middle" letter-spacing="0.5">4,71</text>
<rect x="18" y="608" width="11" height="11" fill="#808080"/>
<rect x="19" y="609" width="9" height="9" fill="#ffffff"/>
<rect x="26" y="611" width="1" height="1" fill="#000"/>
<rect x="25" y="612" width="2" height="1" fill="#000"/>
<rect x="20" y="613" width="1" height="1" fill="#000"/>
<rect x="24" y="613" width="3" height="1" fill="#000"/>
<rect x="20" y="614" width="2" height="1" fill="#000"/>
<rect x="23" y="614" width="3" height="1" fill="#000"/>
<rect x="20" y="615" width="5" height="1" fill="#000"/>
<rect x="21" y="616" width="3" height="1" fill="#000"/>
<rect x="22" y="617" width="1" height="1" fill="#000"/>
<text x="38.5" y="620" fill="#ff0000" font-size="16" letter-spacing="0.5">[7:41] Sin(T())</text>
<text x="345.0" y="620" fill="#ff0000" font-size="16" text-anchor="middle" letter-spacing="0.5">15:58:01.34</text>
<text x="450.0" y="620" fill="#ff0000" font-size="16" text-anchor="middle" letter-spacing="0.5">15:58:06.05</text>
<text x="555.0" y="620" fill="#ff0000" font-size="16" text-anchor="middle" letter-spacing="0.5">4,71 s</text>
<text x="660.0" y="620" fill="#ff0000" font-size="16" text-anchor="middle" letter-spacing="0.5">0,0001</text>
<text x="765.0" y="620" fill="#ff0000" font-size="16" text-anchor="middle" letter-spacing="0.5">0,9988</text>
<text x="876.0" y="620" fill="#ff0000" font-size="16" text-anchor="middle" letter-spacing="0.5">0,9987</text>
<rect x="18" y="631" width="11" height="11" fill="#808080"/>
<rect x="19" y="632" width="9" height="9" fill="#ffffff"/>
<rect x="26" y="634" width="1" height="1" fill="#000"/>
<rect x="25" y="635" width="2" height="1" fill="#000"/>
<rect x="20" y="636" width="1" height="1" fill="#000"/>
<rect x="24" y="636" width="3" height="1" fill="#000"/>
<rect x="20" y="637" width="2" height="1" fill="#000"/>
<rect x="23" y="637" width="3" height="1" fill="#000"/>
<rect x="20" y="638" width="5" height="1" fill="#000"/>
<rect x="21" y="639" width="3" height="1" fill="#000"/>
<rect x="22" y="640" width="1" height="1" fill="#000"/>
<text x="38.5" y="643" fill="#008000" font-size="16" letter-spacing="0.5">[7:42] Cos(T())</text>
<text x="345.0" y="643" fill="#008000" font-size="16" text-anchor="middle" letter-spacing="0.5">15:58:01.34</text>
<text x="450.0" y="643" fill="#008000" font-size="16" text-anchor="middle" letter-spacing="0.5">15:58:06.05</text>
<text x="555.0" y="643" fill="#008000" font-size="16" text-anchor="middle" letter-spacing="0.5">4,71 s</text>
<text x="660.0" y="643" fill="#008000" font-size="16" text-anchor="middle" letter-spacing="0.5">-0,9988</text>
<text x="765.0" y="643" fill="#008000" font-size="16" text-anchor="middle" letter-spacing="0.5">0,0001</text>
<text x="876.0" y="643" fill="#008000" font-size="16" text-anchor="middle" letter-spacing="0.5">0,9989</text>
<rect x="18" y="654" width="11" height="11" fill="#808080"/>
<rect x="19" y="655" width="9" height="9" fill="#ffffff"/>
<rect x="26" y="657" width="1" height="1" fill="#000"/>
<rect x="25" y="658" width="2" height="1" fill="#000"/>
<rect x="20" y="659" width="1" height="1" fill="#000"/>
<rect x="24" y="659" width="3" height="1" fill="#000"/>
<rect x="20" y="660" width="2" height="1" fill="#000"/>
<rect x="23" y="660" width="3" height="1" fill="#000"/>
<rect x="20" y="661" width="5" height="1" fill="#000"/>
<rect x="21" y="662" width="3" height="1" fill="#000"/>
<rect x="22" y="663" width="1" height="1" fill="#000"/>
<text x="38.5" y="666" fill="#808000" font-size="16" letter-spacing="0.5">[7:43] Tan(T())</text>
<text x="345.0" y="666" fill="#808000" font-size="16" text-anchor="middle" letter-spacing="0.5">15:58:01.34</text>
<text x="450.0" y="666" fill="#808000" font-size="16" text-anchor="middle" letter-spacing="0.5">15:58:06.05</text>
<text x="555.0" y="666" fill="#808000" font-size="16" text-anchor="middle" letter-spacing="0.5">4,71 s</text>
<text x="660.0" y="666" fill="#808000" font-size="16" text-anchor="middle" letter-spacing="0.5">0,000</text>
<text x="765.0" y="666" fill="#808000" font-size="16" text-anchor="middle" letter-spacing="0.5">-3,163</text>
<text x="876.0" y="666" fill="#808000" font-size="16" text-anchor="middle" letter-spacing="0.5">-3,163</text>
<path d="M5 610 L5 619 L10 614.5 Z" fill="#000"/></svg></body></html>
